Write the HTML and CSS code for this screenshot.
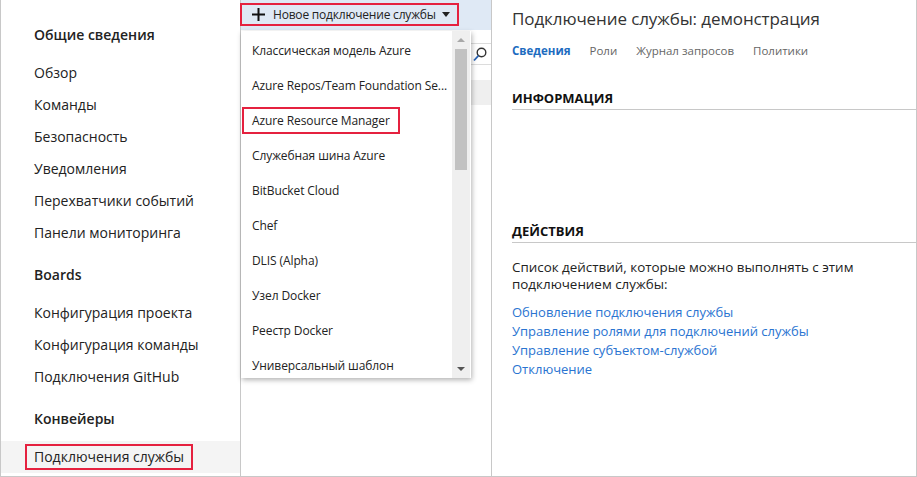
FILE: index.html
```html
<!DOCTYPE html>
<html lang="ru">
<head>
<meta charset="utf-8">
<link rel="stylesheet" href="styles.css">
</head>
<body>
<div class="frame">
  <nav class="sidebar">
    <div class="group">Общие сведения</div>
    <div class="item">Обзор</div>
    <div class="item">Команды</div>
    <div class="item">Безопасность</div>
    <div class="item">Уведомления</div>
    <div class="item">Перехватчики событий</div>
    <div class="item">Панели мониторинга</div>
    <div class="group">Boards</div>
    <div class="item">Конфигурация проекта</div>
    <div class="item">Конфигурация команды</div>
    <div class="item">Подключения GitHub</div>
    <div class="group">Конвейеры</div>
    <div class="item selected"><span class="hl">Подключения службы</span></div>
  </nav>

  <section class="middle">
    <div class="toolbar">
      <div class="newbtn">
        <svg class="plus" width="13" height="13" viewBox="0 0 13 13"><path d="M6.5 0v13M0 6.5h13" stroke="#111" stroke-width="2"/></svg>
        <span>Новое подключение службы</span>
        <svg class="caret" width="8" height="5" viewBox="0 0 8 5"><path d="M0 0h8L4 5z" fill="#222"/></svg>
      </div>
    </div>
    <div class="searchrow">
      <div class="search">
        <svg width="14" height="15" viewBox="0 0 14 15"><circle cx="8.5" cy="5.5" r="4.3" fill="none" stroke="#333" stroke-width="1.4"/><path d="M5.5 8.7L1 13.5" stroke="#2b64b4" stroke-width="1.8"/></svg>
      </div>
    </div>
    <div class="listrow sel"></div>

    <div class="dropdown">
      <ul class="menu">
        <li>Классическая модель Azure</li>
        <li>Azure Repos/Team Foundation Se...</li>
        <li><span class="hl2">Azure Resource Manager</span></li>
        <li>Служебная шина Azure</li>
        <li>BitBucket Cloud</li>
        <li>Chef</li>
        <li>DLIS (Alpha)</li>
        <li>Узел Docker</li>
        <li>Реестр Docker</li>
        <li>Универсальный шаблон</li>
      </ul>
      <div class="scrollbar">
        <div class="arrow up"></div>
        <div class="track"><div class="thumb"></div></div>
        <div class="arrow down"></div>
      </div>
    </div>
  </section>

  <main class="details">
    <h1 class="title">Подключение службы: демонстрация</h1>
    <div class="tabs">
      <span class="tab active">Сведения</span>
      <span class="tab">Роли</span>
      <span class="tab">Журнал запросов</span>
      <span class="tab">Политики</span>
    </div>
    <h2 class="section">ИНФОРМАЦИЯ</h2>
    <div class="info"></div>
    <h2 class="section">ДЕЙСТВИЯ</h2>
    <p class="desc">Список действий, которые можно выполнять с этим подключением службы:</p>
    <div class="links">
      <a>Обновление подключения службы</a>
      <a>Управление ролями для подключений службы</a>
      <a>Управление субъектом-службой</a>
      <a>Отключение</a>
    </div>
  </main>
</div>
</body>
</html>
```

FILE: styles.css
```css
* { box-sizing: border-box; }
html, body { margin: 0; padding: 0; background: #fff; }
body {
  font-family: "Open Sans", "Noto Sans", sans-serif;
  color: #222;
}
.frame {
  width: 917px;
  height: 477px;
  display: flex;
  border-left: 1px solid #c8c8c8;
  border-bottom: 1px solid #c8c8c8;
  border-right: 1px solid #c8c8c8;
  overflow: hidden;
}

/* sidebar */
.sidebar {
  width: 240px;
  flex: none;
  border-right: 1px solid #c8c8c8;
  padding-top: 23px;
  display: flex;
  flex-direction: column;
}
.group {
  font-size: 14px;
  font-weight: 600;
  padding-left: 33px;
  height: 24px;
  line-height: 24px;
  margin-bottom: 10px;
}
.item {
  font-size: 14px;
  padding-left: 33px;
  height: 32px;
  line-height: 32px;
}
.item + .group { margin-top: 14px; }
.item.selected {
  background: #f4f4f4;
  padding-left: 24px;
  display: flex;
  align-items: center;
}
.hl {
  border: 2px solid #e5213f;
  height: 26px;
  line-height: 22px;
  padding: 0 7px;
}

/* middle */
.middle {
  width: 251px;
  flex: none;
  border-right: 1px solid #c8c8c8;
  position: relative;
}
.toolbar {
  height: 30px;
  background: #dfe9f5;
  padding: 3px 0 0 0;
}
.newbtn {
  display: inline-flex;
  align-items: center;
  height: 23px;
  border: 2px solid #e5213f;
  padding: 0 7px 0 10px;
  font-size: 12px;
  letter-spacing: -0.2px;
  color: #222;
  margin-left: -1px;
}
.newbtn .plus { margin-right: 8px; }
.newbtn .caret { margin-left: 6px; }
.searchrow {
  height: 50px;
  display: flex;
  justify-content: flex-end;
  padding: 13px 0 0 0;
}
.search {
  width: 36px;
  height: 22px;
  border: 1px solid #dcdcdc;
  border-right: none;
  display: flex;
  align-items: center;
  justify-content: flex-end;
  padding-right: 4px;
}
.listrow.sel {
  height: 25px;
  background: #efefef;
}

.dropdown {
  position: absolute;
  left: 0;
  top: 31px;
  width: 230px;
  height: 347px;
  background: #fff;
  box-shadow: 1px 2px 5px rgba(0,0,0,0.3);
  display: flex;
}
.menu {
  list-style: none;
  margin: 0;
  padding: 2px 0 0 0;
  flex: 1;
  font-size: 12px;
  letter-spacing: -0.1px;
}
.menu li {
  height: 35px;
  line-height: 35px;
  padding-left: 11px;
  white-space: nowrap;
}
.hl2 {
  display: inline-block;
  margin-left: -10px;
  border: 2px solid #e5213f;
  height: 27px;
  line-height: 23px;
  padding: 0 8px;
}
.scrollbar {
  width: 18px;
  background: #efefef;
  display: flex;
  flex-direction: column;
  margin-right: 1px;
}
.arrow { height: 17px; position: relative; }
.arrow.up::after, .arrow.down::after {
  content: "";
  position: absolute;
  left: 5px;
  border-left: 4px solid transparent;
  border-right: 4px solid transparent;
}
.arrow.up::after { top: 7px; border-bottom: 4px solid #a8a8a8; }
.arrow.down::after { top: 6px; border-top: 4px solid #555; }
.track { flex: 1; padding: 1px 2px; }
.thumb { height: 121px; background: #c2c2c2; margin: 0 1px; }

/* details */
.details {
  flex: 1;
  padding: 0 0 0 20px;
}
.title {
  font-size: 17px;
  font-weight: 400;
  color: #333;
  margin: 0;
  padding-top: 8px;
  height: 40px;
  line-height: 22px;
  letter-spacing: -0.1px;
}
.tabs {
  display: flex;
  gap: 19px;
  font-size: 11.5px;
  color: #666;
  height: 22px;
  line-height: 22px;
}
.tab.active { color: #1e6cbf; font-weight: 700; }
.section {
  font-size: 13px;
  font-weight: 700;
  color: #111;
  margin: 0;
  border-bottom: 1px solid #c8c8c8;
  height: 48px;
  padding-top: 26px;
  line-height: 20px;
}
.info { height: 85px; }
.desc {
  margin: 16px 0 0 0;
  font-size: 13.4px;
  line-height: 17px;
  color: #222;
  width: 350px;
}
.links {
  margin-top: 10px;
  display: flex;
  flex-direction: column;
  font-size: 13px;
  line-height: 19px;
}
.links a { color: #2a74d1; }
```
